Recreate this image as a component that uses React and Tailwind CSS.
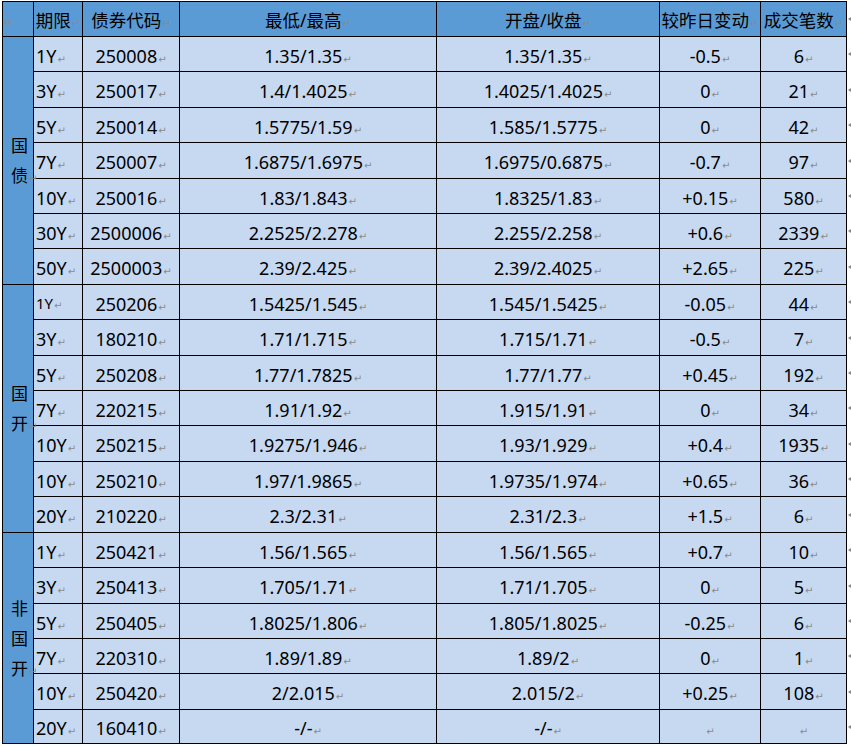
const LINES = [1, 36, 71, 107, 142, 178, 213, 248, 284, 319, 355, 390, 425, 461, 496, 532, 567, 603, 638, 673, 709, 743]

const GROUPS = [
  {
    name: ['国', '债'],
    rows: [
      ['1Y', '250008', '1.35/1.35', '1.35/1.35', '-0.5', '6'],
      ['3Y', '250017', '1.4/1.4025', '1.4025/1.4025', '0', '21'],
      ['5Y', '250014', '1.5775/1.59', '1.585/1.5775', '0', '42'],
      ['7Y', '250007', '1.6875/1.6975', '1.6975/0.6875', '-0.7', '97'],
      ['10Y', '250016', '1.83/1.843', '1.8325/1.83', '+0.15', '580'],
      ['30Y', '2500006', '2.2525/2.278', '2.255/2.258', '+0.6', '2339'],
      ['50Y', '2500003', '2.39/2.425', '2.39/2.4025', '+2.65', '225'],
    ],
  },
  {
    name: ['国', '开'],
    rows: [
      ['1Y', '250206', '1.5425/1.545', '1.545/1.5425', '-0.05', '44', true],
      ['3Y', '180210', '1.71/1.715', '1.715/1.71', '-0.5', '7'],
      ['5Y', '250208', '1.77/1.7825', '1.77/1.77', '+0.45', '192'],
      ['7Y', '220215', '1.91/1.92', '1.915/1.91', '0', '34'],
      ['10Y', '250215', '1.9275/1.946', '1.93/1.929', '+0.4', '1935'],
      ['10Y', '250210', '1.97/1.9865', '1.9735/1.974', '+0.65', '36'],
      ['20Y', '210220', '2.3/2.31', '2.31/2.3', '+1.5', '6'],
    ],
  },
  {
    name: ['非', '国', '开'],
    rows: [
      ['1Y', '250421', '1.56/1.565', '1.56/1.565', '+0.7', '10'],
      ['3Y', '250413', '1.705/1.71', '1.71/1.705', '0', '5'],
      ['5Y', '250405', '1.8025/1.806', '1.805/1.8025', '-0.25', '6'],
      ['7Y', '220310', '1.89/1.89', '1.89/2', '0', '1'],
      ['10Y', '250420', '2/2.015', '2.015/2', '+0.25', '108'],
      ['20Y', '160410', '-/-', '-/-', '', ''],
    ],
  },
]

// word paragraph mark
function Mark() {
  return <span className="ml-[1px] font-['DejaVu_Sans',sans-serif] text-[10px] text-[#8a8a8a]">↵</span>
}

// end-of-row marker, drawn
function RowEnd() {
  return (
    <svg width="5" height="8" viewBox="0 0 5 8" className="block">
      <path d="M0 4 L5 0.5 L5 7.5 Z" fill="#8a8a8a" />
    </svg>
  )
}

function Cell({ children, className = '' }) {
  return (
    <td className={`whitespace-nowrap border border-black bg-[#c6d9f1] p-0 pt-[3px] align-middle ${className}`}>
      {children}
      <Mark />
    </td>
  )
}

export default function App() {
  let rowIdx = 1
  const h = (i) => LINES[i + 1] - LINES[i]

  return (
    <div className="min-h-screen bg-white pl-[2px] pt-[1px] font-['Noto_Sans','Noto_Sans_CJK_SC',sans-serif] text-[18px] leading-none text-black">
      <table className="w-[849px] table-fixed border-collapse">
        <colgroup>
          <col className="w-[31px]" />
          <col className="w-[49px]" />
          <col className="w-[97px]" />
          <col className="w-[257px]" />
          <col className="w-[223px]" />
          <col className="w-[101px]" />
          <col className="w-[86px]" />
          <col className="w-[5px]" />
        </colgroup>
        <thead>
          <tr style={{ height: h(0) }}>
            <th className="border border-black bg-[#5b9bd5] p-0 text-left font-normal">
              <Mark />
            </th>
            {['期限', '债券代码', '最低/最高', '开盘/收盘', '较昨日变动', '成交笔数'].map((t) => (
              <th key={t} className="whitespace-nowrap border border-black bg-[#5b9bd5] p-0 pt-[3px] text-center text-[17.5px] font-normal">
                {t}
                <Mark />
              </th>
            ))}
            <th className="p-0 pl-[1px]">
              <RowEnd />
            </th>
          </tr>
        </thead>
        <tbody>
          {GROUPS.map((g) =>
            g.rows.map((r, i) => {
              const height = h(rowIdx++)
              return (
                <tr key={g.name.join('') + i} style={{ height }}>
                  {i === 0 && (
                    <td rowSpan={g.rows.length} className="border border-black bg-[#5b9bd5] p-0 pl-[8px] pt-[4px] align-middle">
                      <div className="flex flex-col whitespace-nowrap text-[17px] leading-[30px]">
                        {g.name.map((c, k) => (
                          <span key={k}>
                            {c}
                            {k === g.name.length - 1 && <Mark />}
                          </span>
                        ))}
                      </div>
                    </td>
                  )}
                  <Cell className={`pl-[2px] text-left ${r[6] ? 'text-[15px]' : ''}`}>{r[0]}</Cell>
                  <Cell className="text-center">{r[1]}</Cell>
                  <Cell className="text-center">{r[2]}</Cell>
                  <Cell className="text-center">{r[3]}</Cell>
                  <Cell className="text-center">{r[4]}</Cell>
                  <Cell className="text-center">{r[5]}</Cell>
                  <td className="p-0 pl-[1px]">
                    <RowEnd />
                  </td>
                </tr>
              )
            })
          )}
        </tbody>
      </table>
    </div>
  )
}
